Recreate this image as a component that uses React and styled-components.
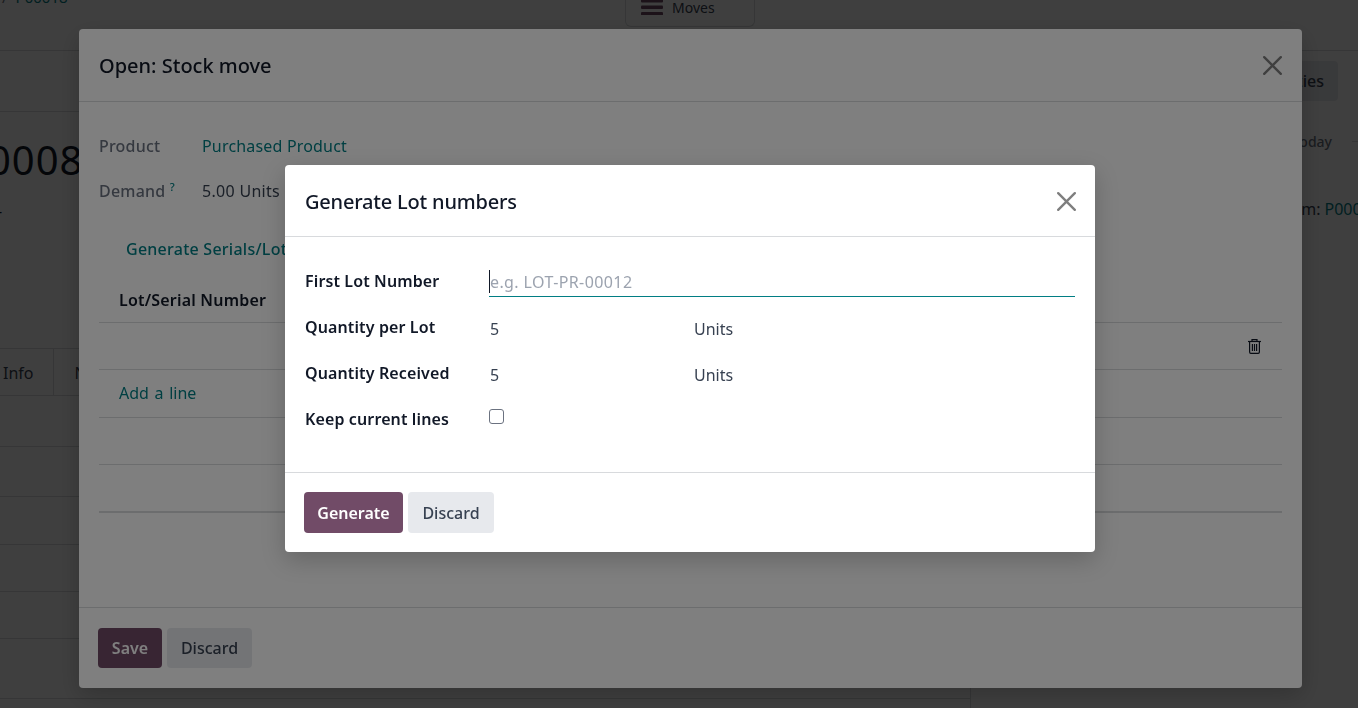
import React from "react";
import styled, { createGlobalStyle } from "styled-components";

const GlobalStyle = createGlobalStyle`
  html, body {
    margin: 0;
    padding: 0;
    height: 100%;
    overflow: hidden;
    background: #ffffff;
  }
  body {
    font-family: "Noto Sans", "Open Sans", sans-serif;
    font-size: 16px;
    color: #374151;
  }
`;

const CloseIcon = ({ size = 19 }) => (
  <svg width={size} height={size} viewBox="0 0 16 16" fill="#000" opacity="0.5">
    <path d="M.293.293a1 1 0 0 1 1.414 0L8 6.586 14.293.293a1 1 0 1 1 1.414 1.414L9.414 8l6.293 6.293a1 1 0 0 1-1.414 1.414L8 9.414l-6.293 6.293a1 1 0 0 1-1.414-1.414L6.586 8 .293 1.707a1 1 0 0 1 0-1.414z" />
  </svg>
);

const TrashIcon = () => (
  <svg width="15" height="16" viewBox="0 0 15 16" fill="none" stroke="#111827" strokeWidth="1.2">
    <path d="M1 3.5h13" />
    <path d="M5 3.5V1.6h5v1.9" />
    <path d="M2.6 3.5v10.6c0 .8.5 1.3 1.2 1.3h7.4c.7 0 1.2-.5 1.2-1.3V3.5" />
    <path d="M5.4 6v7M7.5 6v7M9.6 6v7" />
  </svg>
);

const BarsIcon = () => (
  <svg width="22" height="16" viewBox="0 0 22 16" fill="#714b67">
    <rect x="0" y="0" width="22" height="3.4" rx="1" />
    <rect x="0" y="6.5" width="22" height="3.4" rx="1" />
    <rect x="0" y="13" width="22" height="3.4" rx="1" />
  </svg>
);

const rowHeights = [51, 50, 48, 47, 47, 60];

export default function App() {
  return (
    <Page>
      <GlobalStyle />
      <TopBar>
        <Breadcrumb>
          <span>/</span>
          <BreadLink>P00018</BreadLink>
        </Breadcrumb>
        <StatButton>
          <BarsIcon />
          <span>Moves</span>
        </StatButton>
      </TopBar>
      <Columns>
        <MainColumn>
          <StatusBar />
          <Heading>00008</Heading>
          <SmallDash>-</SmallDash>
          <Tabs>
            <Tab>Other Info</Tab>
            <Tab>Note</Tab>
          </Tabs>
          {rowHeights.map((h, i) => (
            <BackRow key={i} $h={h} />
          ))}
        </MainColumn>
        <SideColumn>
          <SideButtons>
            <SideButton>Activities</SideButton>
          </SideButtons>
          <TodayRow>
            <span>Today</span>
            <TodayLine />
          </TodayRow>
          <CreatedLine>
            From: <BreadLink>P00018</BreadLink>
          </CreatedLine>
        </SideColumn>
      </Columns>

      <OuterOverlay>
        <StockDialog>
          <DialogHeader $h={72}>
            <DialogTitle>Open: Stock move</DialogTitle>
            <CloseButton><CloseIcon size={19} /></CloseButton>
          </DialogHeader>
          <StockBody>
            <InfoRow>
              <InfoLabel>Product</InfoLabel>
              <ProductLink>Purchased Product</ProductLink>
            </InfoRow>
            <InfoRow>
              <InfoLabel>
                Demand <Help>?</Help>
              </InfoLabel>
              <InfoValue>5.00 Units</InfoValue>
            </InfoRow>
            <GenerateLink>Generate Serials/Lots</GenerateLink>
            <TableHead>Lot/Serial Number</TableHead>
            <LineRow $h={47}>
              <TrashSlot><TrashIcon /></TrashSlot>
            </LineRow>
            <LineRow $h={48}>
              <AddLine>Add a line</AddLine>
            </LineRow>
            <LineRow $h={47} />
            <LineRow $h={47} $thick />
          </StockBody>
          <DialogFooter $h={81}>
            <SaveButton>Save</SaveButton>
            <SecondaryButton $h={40} $w={85}>Discard</SecondaryButton>
          </DialogFooter>
        </StockDialog>
      </OuterOverlay>

      <InnerOverlay>
        <LotDialog>
          <DialogHeader $h={69} $top={2}>
            <LotTitle>Generate Lot numbers</LotTitle>
            <CloseButton $inner><CloseIcon size={19} /></CloseButton>
          </DialogHeader>
          <LotBody>
            <FormGrid>
              <FieldLabel>First Lot Number</FieldLabel>
              <InputWrap>
                <LotInput placeholder="e.g. LOT-PR-00012" />
              </InputWrap>
              <FieldLabel>Quantity per Lot</FieldLabel>
              <QtyRow>
                <QtyValue>5</QtyValue>
                <span>Units</span>
              </QtyRow>
              <FieldLabel>Quantity Received</FieldLabel>
              <QtyRow>
                <QtyValue>5</QtyValue>
                <span>Units</span>
              </QtyRow>
              <FieldLabel>Keep current lines</FieldLabel>
              <CheckCell>
                <KeepCheck type="checkbox" />
              </CheckCell>
            </FormGrid>
          </LotBody>
          <DialogFooter $h={80}>
            <GenerateButton>Generate</GenerateButton>
            <SecondaryButton $h={41} $w={86}>Discard</SecondaryButton>
          </DialogFooter>
        </LotDialog>
      </InnerOverlay>
    </Page>
  );
}

const Page = styled.div`
  width: 1358px;
  height: 708px;
  overflow: hidden;
  background: #ffffff;
`;
const TopBar = styled.div`
  height: 50px;
  display: flex;
  justify-content: space-between;
  border-bottom: 1px solid #d8dadd;
  box-sizing: content-box;
`;
const Breadcrumb = styled.div`
  display: flex;
  gap: 8px;
  height: 20px;
  margin: -13px 0 0 2px;
  color: #6b7280;
  font-size: 15px;
  white-space: nowrap;
`;
const BreadLink = styled.span`
  color: #017e84;
`;
const StatButton = styled.div`
  width: 130px;
  height: 27px;
  margin-right: 603px;
  padding-left: 15px;
  display: flex;
  align-items: flex-start;
  gap: 9px;
  border: 1px solid #d8dadd;
  border-top: 0;
  border-radius: 0 0 6px 6px;
  box-sizing: border-box;
  font-size: 14px;
  line-height: 16px;
  svg {
    margin-top: -1px;
  }
`;
const Columns = styled.div`
  display: flex;
  height: 657px;
`;
const MainColumn = styled.div`
  width: 970px;
  border-right: 1px solid #d8dadd;
  overflow: hidden;
`;
const StatusBar = styled.div`
  height: 60px;
  border-bottom: 1px solid #d8dadd;
`;
const Heading = styled.div`
  height: 64px;
  margin: 16px 0 0 -36px;
  font-size: 40px;
  line-height: 64px;
  letter-spacing: 1px;
  color: #111827;
`;
const SmallDash = styled.div`
  height: 16px;
  margin: 11px 0 0 -3px;
  line-height: 16px;
  color: #111827;
`;
const Tabs = styled.div`
  display: flex;
  height: 46px;
  margin: 129px 0 0 -65px;
  border-top: 1px solid #d8dadd;
  border-bottom: 1px solid #d8dadd;
`;
const Tab = styled.div`
  padding: 0 20px;
  line-height: 48px;
  border-right: 1px solid #d8dadd;
  white-space: nowrap;
`;
const BackRow = styled.div`
  height: ${(p) => p.$h - 1}px;
  border-bottom: 1px solid #d8dadd;
`;
const SideColumn = styled.div`
  flex: 1;
  min-width: 0;
  overflow: hidden;
  padding-top: 10px;
`;
const SideButtons = styled.div`
  display: flex;
  justify-content: flex-end;
  padding-right: 20px;
`;
const SideButton = styled.div`
  height: 40px;
  padding: 0 14px;
  line-height: 40px;
  border-radius: 4px;
  background: #e7e9ed;
  font-weight: 500;
`;
const TodayRow = styled.div`
  display: flex;
  align-items: center;
  justify-content: flex-end;
  gap: 20px;
  margin-top: 31px;
  color: #6b7280;
  font-size: 14px;
  font-weight: 500;
`;
const TodayLine = styled.div`
  width: 6px;
  height: 1px;
  background: #d8dadd;
`;
const CreatedLine = styled.div`
  margin-top: 47px;
  display: flex;
  justify-content: flex-start;
  gap: 4px;
  padding-left: 306px;
  white-space: nowrap;
`;

const OuterOverlay = styled.div`
  position: fixed;
  inset: 0;
  display: flex;
  align-items: flex-start;
  padding: 29px 0 0 79px;
  background: rgba(0, 0, 0, 0.5);
`;
const InnerOverlay = styled(OuterOverlay)`
  padding: 165px 0 0 285px;
`;
const Dialog = styled.div`
  display: flex;
  flex-direction: column;
  background: #ffffff;
  border-radius: 4px;
  box-shadow: 0 8px 24px rgba(0, 0, 0, 0.2);
`;
const StockDialog = styled(Dialog)`
  width: 1223px;
  height: 659px;
`;
const LotDialog = styled(Dialog)`
  width: 810px;
  height: 387px;
`;
const DialogHeader = styled.div`
  height: ${(p) => p.$h}px;
  flex: none;
  display: flex;
  align-items: center;
  justify-content: space-between;
  padding: ${(p) => p.$top || 0}px 20px 0;
  border-bottom: 1px solid #d8dadd;
`;
const DialogTitle = styled.div`
  font-size: 20px;
  font-weight: 500;
  color: #111827;
`;
const LotTitle = styled(DialogTitle)`
  letter-spacing: -0.2px;
`;
const CloseButton = styled.div`
  display: flex;
  margin-right: ${(p) => (p.$inner ? "-1px" : "0")};
`;
const StockBody = styled.div`
  flex: 1;
  padding: 29px 20px 0;
`;
const InfoRow = styled.div`
  display: flex;
  height: 45px;
  line-height: 30px;
`;
const InfoLabel = styled.div`
  width: 103px;
  font-weight: 500;
  letter-spacing: 0.2px;
  color: #6b7280;
`;
const InfoValue = styled.span`
  letter-spacing: 0.3px;
`;
const Help = styled.sup`
  color: #017e84;
  font-size: 11px;
  line-height: 0;
`;
const ProductLink = styled.span`
  color: #017e84;
  letter-spacing: 0.18px;
`;
const GenerateLink = styled.div`
  height: 36px;
  margin: 13px 0 0 27px;
  line-height: 30px;
  color: #017e84;
  font-weight: 500;
  letter-spacing: 0.25px;
`;
const TableHead = styled.div`
  height: 52px;
  padding: 0 20px;
  line-height: 60px;
  font-weight: 600;
  letter-spacing: 0.2px;
  color: #111827;
  border-bottom: 1px solid #d8dadd;
`;
const LineRow = styled.div`
  height: ${(p) => p.$h - 1}px;
  display: flex;
  align-items: center;
  justify-content: space-between;
  padding: 0 20px;
  border-bottom: ${(p) => (p.$thick ? "2px" : "1px")} solid #d8dadd;
`;
const TrashSlot = styled.div`
  display: flex;
  margin-left: auto;
`;
const AddLine = styled.div`
  padding-bottom: 2px;
  color: #017e84;
  word-spacing: 1.5px;
`;
const DialogFooter = styled.div`
  height: ${(p) => p.$h}px;
  flex: none;
  display: flex;
  align-items: center;
  gap: 5px;
  padding: 0 19px;
  border-top: 1px solid #d8dadd;
  box-sizing: border-box;
`;
const ActionButton = styled.div`
  display: flex;
  align-items: center;
  justify-content: center;
  height: 40px;
  border-radius: 4px;
  font-weight: 500;
`;
const SaveButton = styled(ActionButton)`
  width: 64px;
  background: #714b67;
  color: #ffffff;
  font-weight: 600;
`;
const GenerateButton = styled(SaveButton)`
  width: 99px;
  height: 41px;
`;
const SecondaryButton = styled(ActionButton)`
  height: ${(p) => p.$h}px;
  width: ${(p) => p.$w}px;
  background: #e7e9ed;
  color: #374151;
`;
const LotBody = styled.div`
  flex: 1;
  padding: 28px 20px 0;
`;
const FormGrid = styled.div`
  display: grid;
  grid-template-columns: 184px 1fr;
  grid-auto-rows: 46px;
`;
const FieldLabel = styled.div`
  font-weight: 600;
  letter-spacing: 0.12px;
  color: #111827;
  line-height: 32px;
`;
const InputWrap = styled.div`
  position: relative;
  height: 32px;
  &::before {
    content: "";
    position: absolute;
    left: 0;
    top: 5px;
    width: 1px;
    height: 23px;
    background: #111827;
  }
`;
const LotInput = styled.input`
  display: block;
  height: 32px;
  width: 100%;
  box-sizing: border-box;
  padding: 2px 0 0 1px;
  border: 0;
  border-bottom: 1px solid #017e84;
  outline: none;
  background: transparent;
  font: inherit;
  letter-spacing: 0.4px;
  color: #111827;
  &::placeholder {
    color: #9ca3af;
    opacity: 1;
  }
`;
const QtyRow = styled.div`
  display: flex;
  line-height: 36px;
`;
const QtyValue = styled.div`
  width: 205px;
  padding-left: 1px;
  box-sizing: border-box;
`;
const CheckCell = styled.div`
  display: flex;
  padding-top: 6px;
`;
const KeepCheck = styled.input`
  appearance: none;
  width: 15px;
  height: 15px;
  margin: 0;
  border: 1px solid #6b7280;
  border-radius: 3px;
  background: #ffffff;
`;
